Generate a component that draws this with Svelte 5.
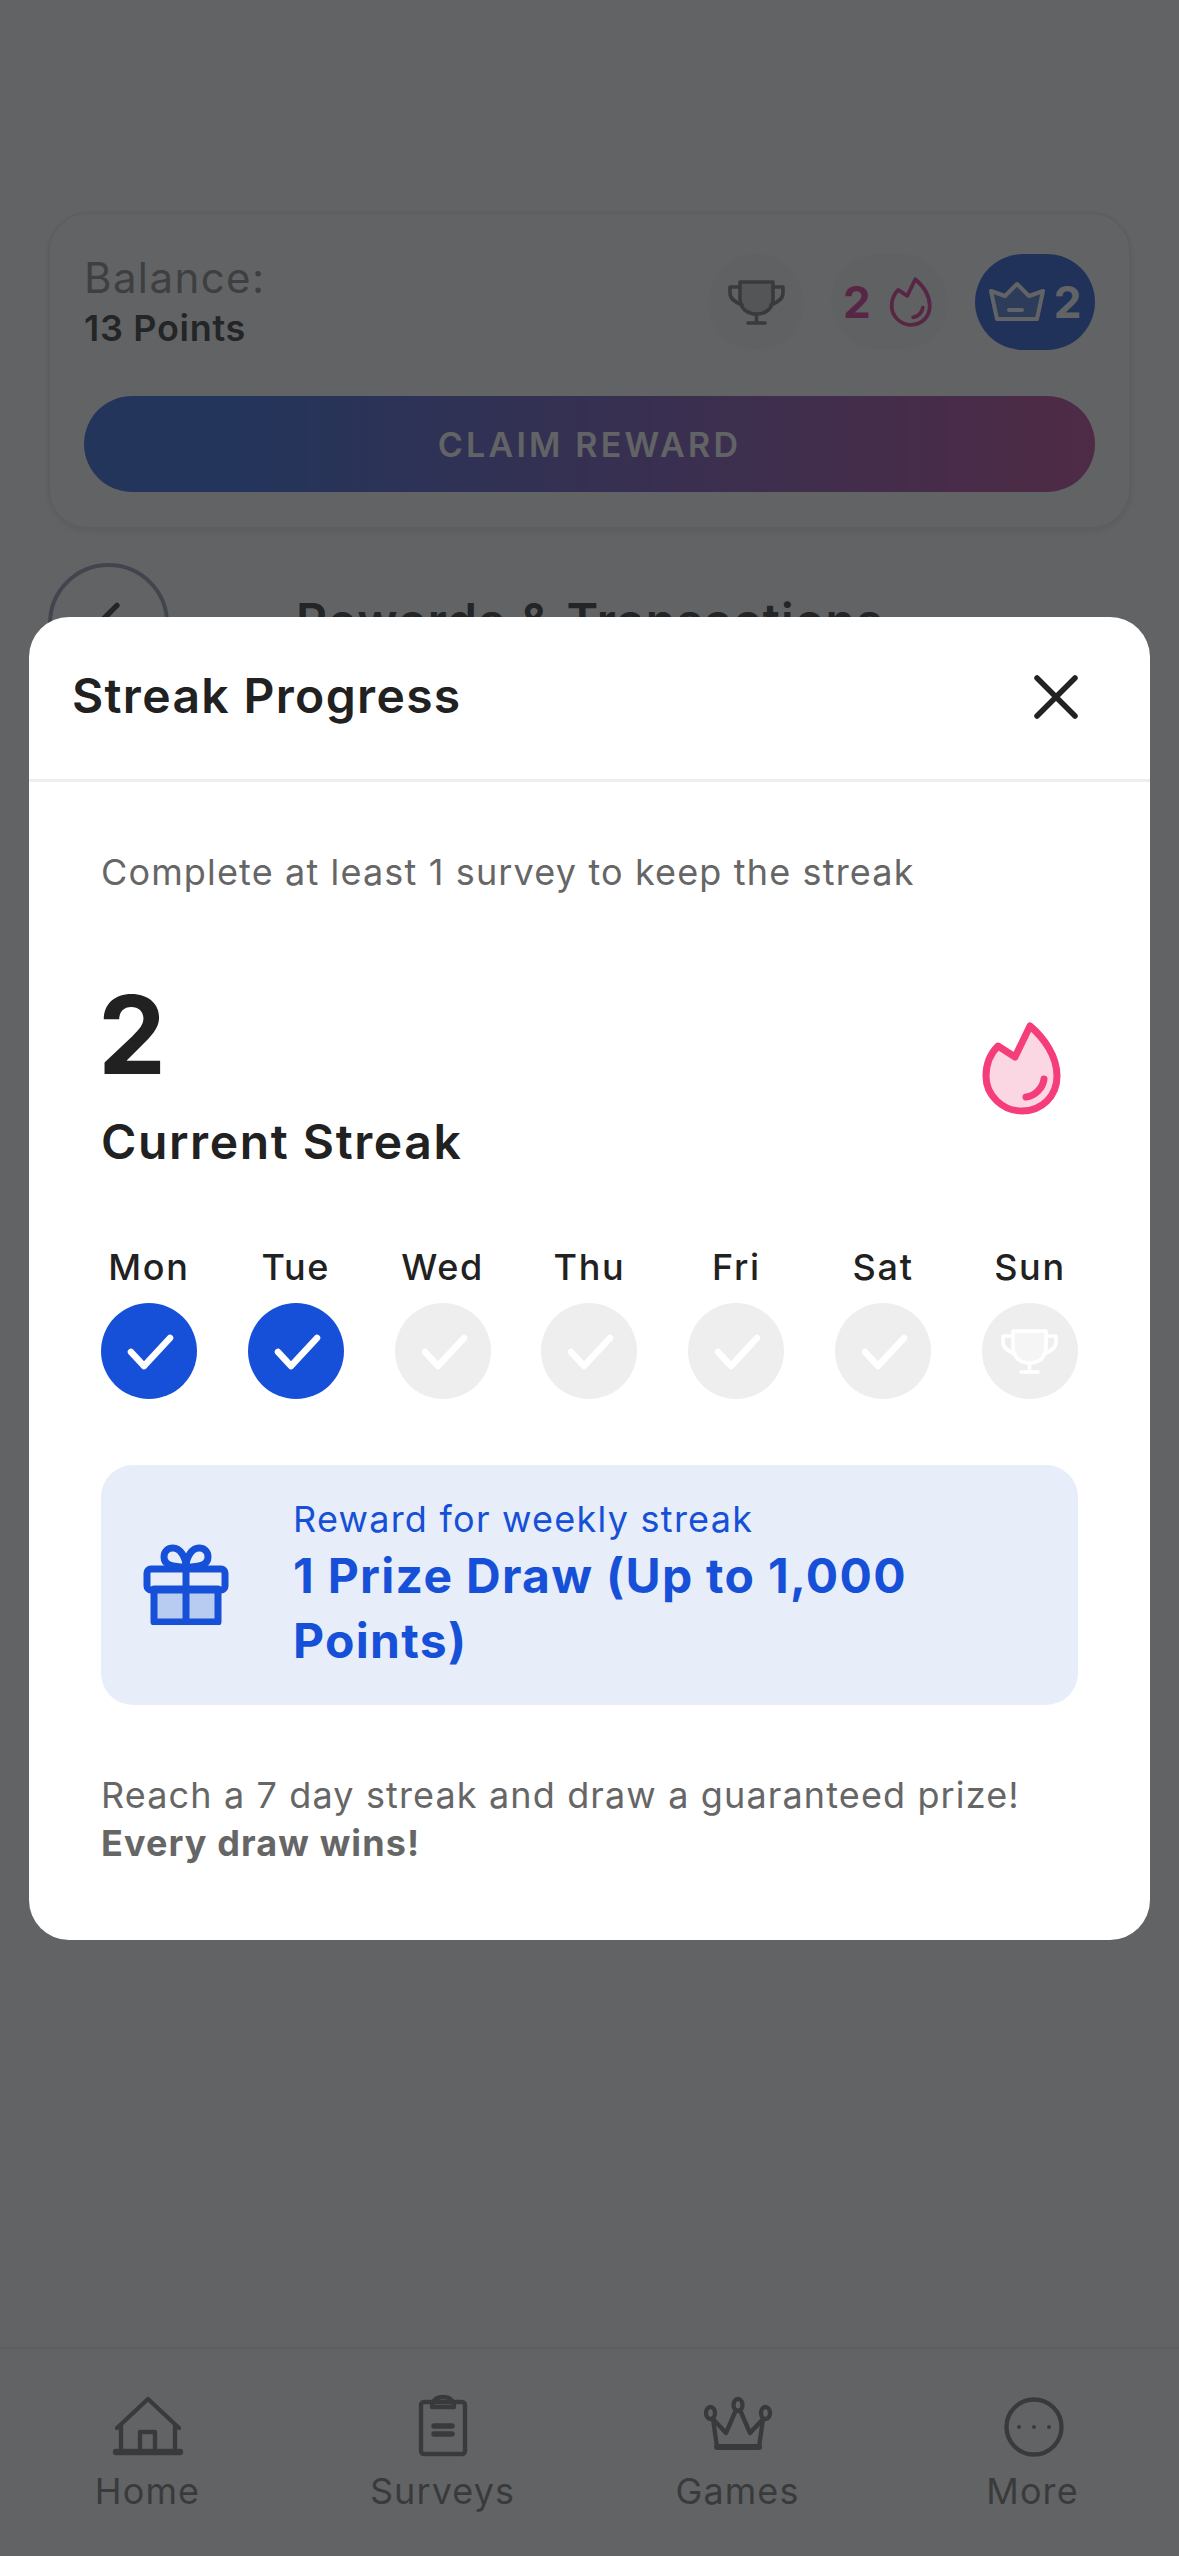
<script>
  const days = [
    { name: 'Mon', done: true },
    { name: 'Tue', done: true },
    { name: 'Wed', done: false },
    { name: 'Thu', done: false },
    { name: 'Fri', done: false },
    { name: 'Sat', done: false },
    { name: 'Sun', done: false, last: true }
  ];
  const tabs = ['Home', 'Surveys', 'Games', 'More'];
</script>

{#snippet flame(cls)}
  <svg class={cls} viewBox="42 20 82 97" fill="none" stroke-width="7" stroke-linecap="round" stroke-linejoin="round">
    <path d="M91 26C105 38 118 56 118 76C118 96 103 111 83 111C63 111 47 95 47 76C47 64 52 53 59 46L76 57Z" />
    <path d="M105 79C104 88 96 96 87 97" />
  </svg>
{/snippet}

{#snippet trophy(cls)}
  <svg class={cls} viewBox="50 41 59 48" fill="none" stroke-width="3.6" stroke-linecap="round" stroke-linejoin="round">
    <path class="cup" d="M63 45H96V62C96 72 88 77 79.5 77C71 77 63 72 63 62Z" />
    <path d="M63 50H53V56C53 62 58 65 65 68M96 50H106V56C106 62 101 65 94 68M79.5 77V86M71 86H88" />
  </svg>
{/snippet}

<div class="page">
  <div class="content">
    <div class="card">
      <div class="card-top">
        <div class="balance">
          <div class="balance-label">Balance:</div>
          <div class="balance-value">13 Points</div>
        </div>
        <div class="pills">
          <div class="pill trophy-pill">{@render trophy('trophy-dark')}</div>
          <div class="pill streak-pill"><span>2</span>{@render flame('flame-small')}</div>
          <div class="pill crown-pill">
            <svg class="crown" viewBox="0 0 56 42" fill="none" stroke="#fff" stroke-width="4" stroke-linecap="round" stroke-linejoin="round">
              <path fill="rgba(255,255,255,.2)" d="M2 10L16 15L28 3L40 15L54 10L48 38H8Z" />
              <path d="M20 29H33" />
            </svg>
            <span>2</span>
          </div>
        </div>
      </div>
      <button class="claim">CLAIM REWARD</button>
    </div>

    <div class="back-row">
      <div class="back">
        <svg viewBox="0 0 24 24" fill="none" stroke="#222" stroke-width="2" stroke-linecap="round" stroke-linejoin="round"><path d="M15 5L8 12L15 19" /></svg>
      </div>
      <h2>Rewards &amp; Transactions</h2>
    </div>
  </div>

  <nav class="tabs">
    {#each tabs as tab}
      <div class="tab">
        <svg class="tab-icon" viewBox="0 0 70 62" fill="none" stroke="#6e6e6e" stroke-width="4.4" stroke-linecap="round" stroke-linejoin="round">
          {#if tab === 'Home'}
            <path d="M4 31L35 2L66 31M8 28V55M62 28V55M27 55V35H42V55" />
            <path d="M3 55H67" stroke-width="6.5" />
          {:else if tab === 'Surveys'}
            <path d="M16 5H54A3 3 0 0 1 57 8V54A3 3 0 0 1 54 57H16A3 3 0 0 1 13 54V8A3 3 0 0 1 16 5Z" />
            <path d="M24 10C24 3 29 0 35 0C41 0 46 3 46 10Z" />
            <path d="M26 29H44M26 37H44" stroke-width="5.5" />
          {:else if tab === 'Games'}
            <path d="M10 22L14 50M60 22L56 50M10 22L23 36L33 13M60 22L47 36L37 13" />
            <path d="M14 50H56" stroke-width="6" />
            <ellipse cx="7.5" cy="16" rx="4.5" ry="6" /><ellipse cx="35" cy="8" rx="4.5" ry="6" /><ellipse cx="62.5" cy="16" rx="4.5" ry="6" />
          {:else}
            <circle cx="36" cy="30" r="27.5" />
            <circle cx="21" cy="30" r="2" fill="#6e6e6e" stroke="none" /><circle cx="36" cy="30" r="2" fill="#6e6e6e" stroke="none" /><circle cx="51" cy="30" r="2" fill="#6e6e6e" stroke="none" />
          {/if}
        </svg>
        <span>{tab}</span>
      </div>
    {/each}
  </nav>

  <div class="overlay">
    <section class="modal">
      <header class="modal-head">
        <h1>Streak Progress</h1>
        <svg class="close" viewBox="0 0 44 44" fill="none" stroke="#222" stroke-width="5.5" stroke-linecap="round"><path d="M3 3L41 41M41 3L3 41" /></svg>
      </header>

      <div class="modal-body">
        <p class="sub">Complete at least 1 survey to keep the streak</p>

        <div class="streak">
          <div>
            <div class="count">2</div>
            <div class="streak-label">Current Streak</div>
          </div>
          {@render flame('flame-big')}
        </div>

        <div class="days">
          {#each days as day}
            <div class="day">
              <span>{day.name}</span>
              <div class="dot" class:done={day.done}>
                {#if day.last}
                  {@render trophy('trophy-light')}
                {:else}
                  <svg class="check" viewBox="0 0 96 96" fill="none" stroke="#fff" stroke-width="6.5" stroke-linecap="round" stroke-linejoin="round"><path d="M30 49L43 63L69 35" /></svg>
                {/if}
              </div>
            </div>
          {/each}
        </div>

        <div class="reward">
          <svg class="gift" viewBox="23 20 86 81" fill="none" stroke="#1650d8" stroke-width="7" stroke-linecap="round" stroke-linejoin="round">
            <rect x="34" y="65" width="64" height="33" fill="#b8cbf0" />
            <rect x="27" y="45" width="78" height="21" rx="4" />
            <path d="M66 45V98M66 43C52 43 44 41 44 33C44 27 48 24 53 24C60 24 66 33 66 43C66 33 72 24 79 24C84 24 88 27 88 33C88 41 80 43 66 43Z" />
          </svg>
          <div class="reward-text">
            <div class="reward-sub">Reward for weekly streak</div>
            <div class="reward-title">1 Prize Draw (Up to 1,000 Points)</div>
          </div>
        </div>

        <p class="foot">Reach a 7 day streak and draw a guaranteed prize!<br /><strong>Every draw wins!</strong></p>
      </div>
    </section>
  </div>
</div>

<style>
  :global(body) {
    margin: 0;
    background: #fff;
    font-family: Inter, "Noto Sans", sans-serif;
    color: #212121;
  }

  .page {
    position: relative;
    height: 2556px;
    display: flex;
    flex-direction: column;
    overflow: hidden;
    background: #fff;
  }

  .content {
    flex: 1;
    padding: 212px 48px 0;
  }

  /* balance card behind the overlay */
  .card {
    height: 317px;
    box-sizing: border-box;
    padding: 40px 34px 0;
    background: #fdfffc;
    border: 2px solid #ededed;
    border-radius: 40px;
    box-shadow: 0 2px 6px rgba(0, 0, 0, .12);
  }

  .card-top {
    display: flex;
    justify-content: space-between;
    align-items: center;
    height: 96px;
  }

  .balance-label {
    font-size: 42px;
    line-height: 52px;
    color: #7d7d7d;
    letter-spacing: 1.4px;
  }

  .balance-value {
    font-size: 36px;
    line-height: 48px;
    font-weight: 600;
    letter-spacing: .7px;
  }

  .pills {
    display: flex;
    align-items: center;
    gap: 27px;
  }

  .pill {
    height: 96px;
    display: flex;
    align-items: center;
    justify-content: center;
    border-radius: 48px;
    background: #f6f6f6;
    font-size: 44px;
    font-weight: 700;
  }

  .trophy-pill {
    width: 96px;
  }

  .streak-pill {
    width: 117px;
    box-sizing: border-box;
    padding-left: 12px;
    justify-content: flex-start;
    gap: 18px;
    color: #d8248e;
  }

  .crown-pill {
    width: 120px;
    gap: 9px;
    background: #1650d8;
    color: #fff;
  }

  .crown {
    width: 56px;
    height: 42px;
  }

  .flame-small {
    width: 44px;
    height: 52px;
    stroke: #d8248e;
  }

  .trophy-dark {
    width: 59px;
    height: 48px;
    stroke: #6e6e6e;
  }

  .trophy-dark .cup {
    fill: rgba(110, 110, 110, .3);
  }

  .claim {
    display: block;
    width: 100%;
    height: 96px;
    margin-top: 46px;
    border: 0;
    border-radius: 48px;
    background: linear-gradient(90deg, #1650d8 15%, #b62b88 100%);
    color: #fff;
    font: 600 34px Inter, sans-serif;
    letter-spacing: 3.2px;
    opacity: .95;
  }

  .back-row {
    display: flex;
    align-items: center;
    gap: 127px;
    margin-top: 34px;
  }

  .back {
    width: 113px;
    height: 113px;
    border: 4px solid #8b93ad;
    border-radius: 50%;
    display: flex;
    align-items: center;
    justify-content: center;
  }

  .back svg {
    width: 64px;
    height: 64px;
  }

  .back-row h2 {
    margin: 0 0 6px;
    font-size: 48px;
    font-weight: 600;
    letter-spacing: 1.4px;
  }

  /* bottom tabs */
  .tabs {
    height: 209px;
    box-sizing: border-box;
    padding: 48px 0 0;
    border-top: 2px solid #ececec;
    display: grid;
    grid-template-columns: repeat(4, 295px);
  }

  .tab {
    display: flex;
    flex-direction: column;
    align-items: center;
    color: #6e6e6e;
    font-size: 36px;
    line-height: 44px;
    letter-spacing: 1.1px;
  }

  .tab-icon {
    width: 70px;
    height: 62px;
    margin-bottom: 10px;
    overflow: visible;
  }

  /* modal */
  .overlay {
    position: absolute;
    inset: 0;
    padding: 617px 29px 0;
    background: rgba(38, 39, 41, .72);
  }

  .modal {
    height: 1323px;
    background: #fff;
    border-radius: 40px;
    overflow: hidden;
  }

  .modal-head {
    height: 165px;
    box-sizing: border-box;
    padding: 0 43px 3px;
    display: flex;
    justify-content: space-between;
    align-items: center;
    border-bottom: 3px solid #eeeeee;
  }

  .modal-head h1 {
    margin: 0 0 2px;
    font-size: 48px;
    line-height: 60px;
    font-weight: 600;
    letter-spacing: 1.35px;
  }

  .close {
    width: 44px;
    height: 44px;
    margin-right: 29px;
  }

  .modal-body {
    padding: 66px 72px 0;
  }

  .sub {
    margin: 0;
    font-size: 36px;
    line-height: 48px;
    color: #666;
    letter-spacing: 1.15px;
  }

  .streak {
    display: flex;
    justify-content: space-between;
    align-items: center;
    margin-top: 78px;
  }

  .count {
    margin-left: -3px;
    font-size: 108px;
    line-height: 122px;
    font-weight: 700;
  }

  .streak-label {
    margin-top: 16px;
    font-size: 48px;
    line-height: 60px;
    font-weight: 600;
    letter-spacing: 1.6px;
  }

  .flame-big {
    width: 82px;
    height: 97px;
    margin: 0 15px 10px 0;
    stroke: #f53d7a;
    fill: #fbd7e4;
  }

  .days {
    display: flex;
    justify-content: space-between;
    margin-top: 73px;
  }

  .day {
    width: 96px;
    display: flex;
    flex-direction: column;
    align-items: center;
    gap: 14px;
    font-size: 36px;
    line-height: 44px;
    font-weight: 500;
    letter-spacing: 1.7px;
  }

  .dot {
    width: 96px;
    height: 96px;
    border-radius: 50%;
    background: #eeeeee;
    display: flex;
    align-items: center;
    justify-content: center;
  }

  .dot.done {
    background: #1650d8;
  }

  .check {
    width: 96px;
    height: 96px;
  }

  .trophy-light {
    width: 59px;
    height: 48px;
    stroke: #fff;
  }

  .trophy-light .cup {
    fill: rgba(255, 255, 255, .4);
  }

  .reward {
    margin-top: 66px;
    padding: 30px 30px 32px 42px;
    display: flex;
    align-items: center;
    gap: 64px;
    background: #e7edf9;
    border-radius: 32px;
    color: #1650d8;
  }

  .gift {
    flex: none;
    width: 86px;
    height: 81px;
  }

  .reward-sub {
    font-size: 36px;
    line-height: 48px;
    letter-spacing: 1.25px;
  }

  .reward-title {
    font-size: 48px;
    line-height: 65px;
    font-weight: 700;
    letter-spacing: 1.3px;
  }

  .foot {
    margin: 66px 0 0;
    font-size: 36px;
    line-height: 48px;
    color: #666;
    letter-spacing: 1.13px;
  }

  .foot strong {
    font-weight: 700;
    letter-spacing: 1.1px;
  }
</style>
